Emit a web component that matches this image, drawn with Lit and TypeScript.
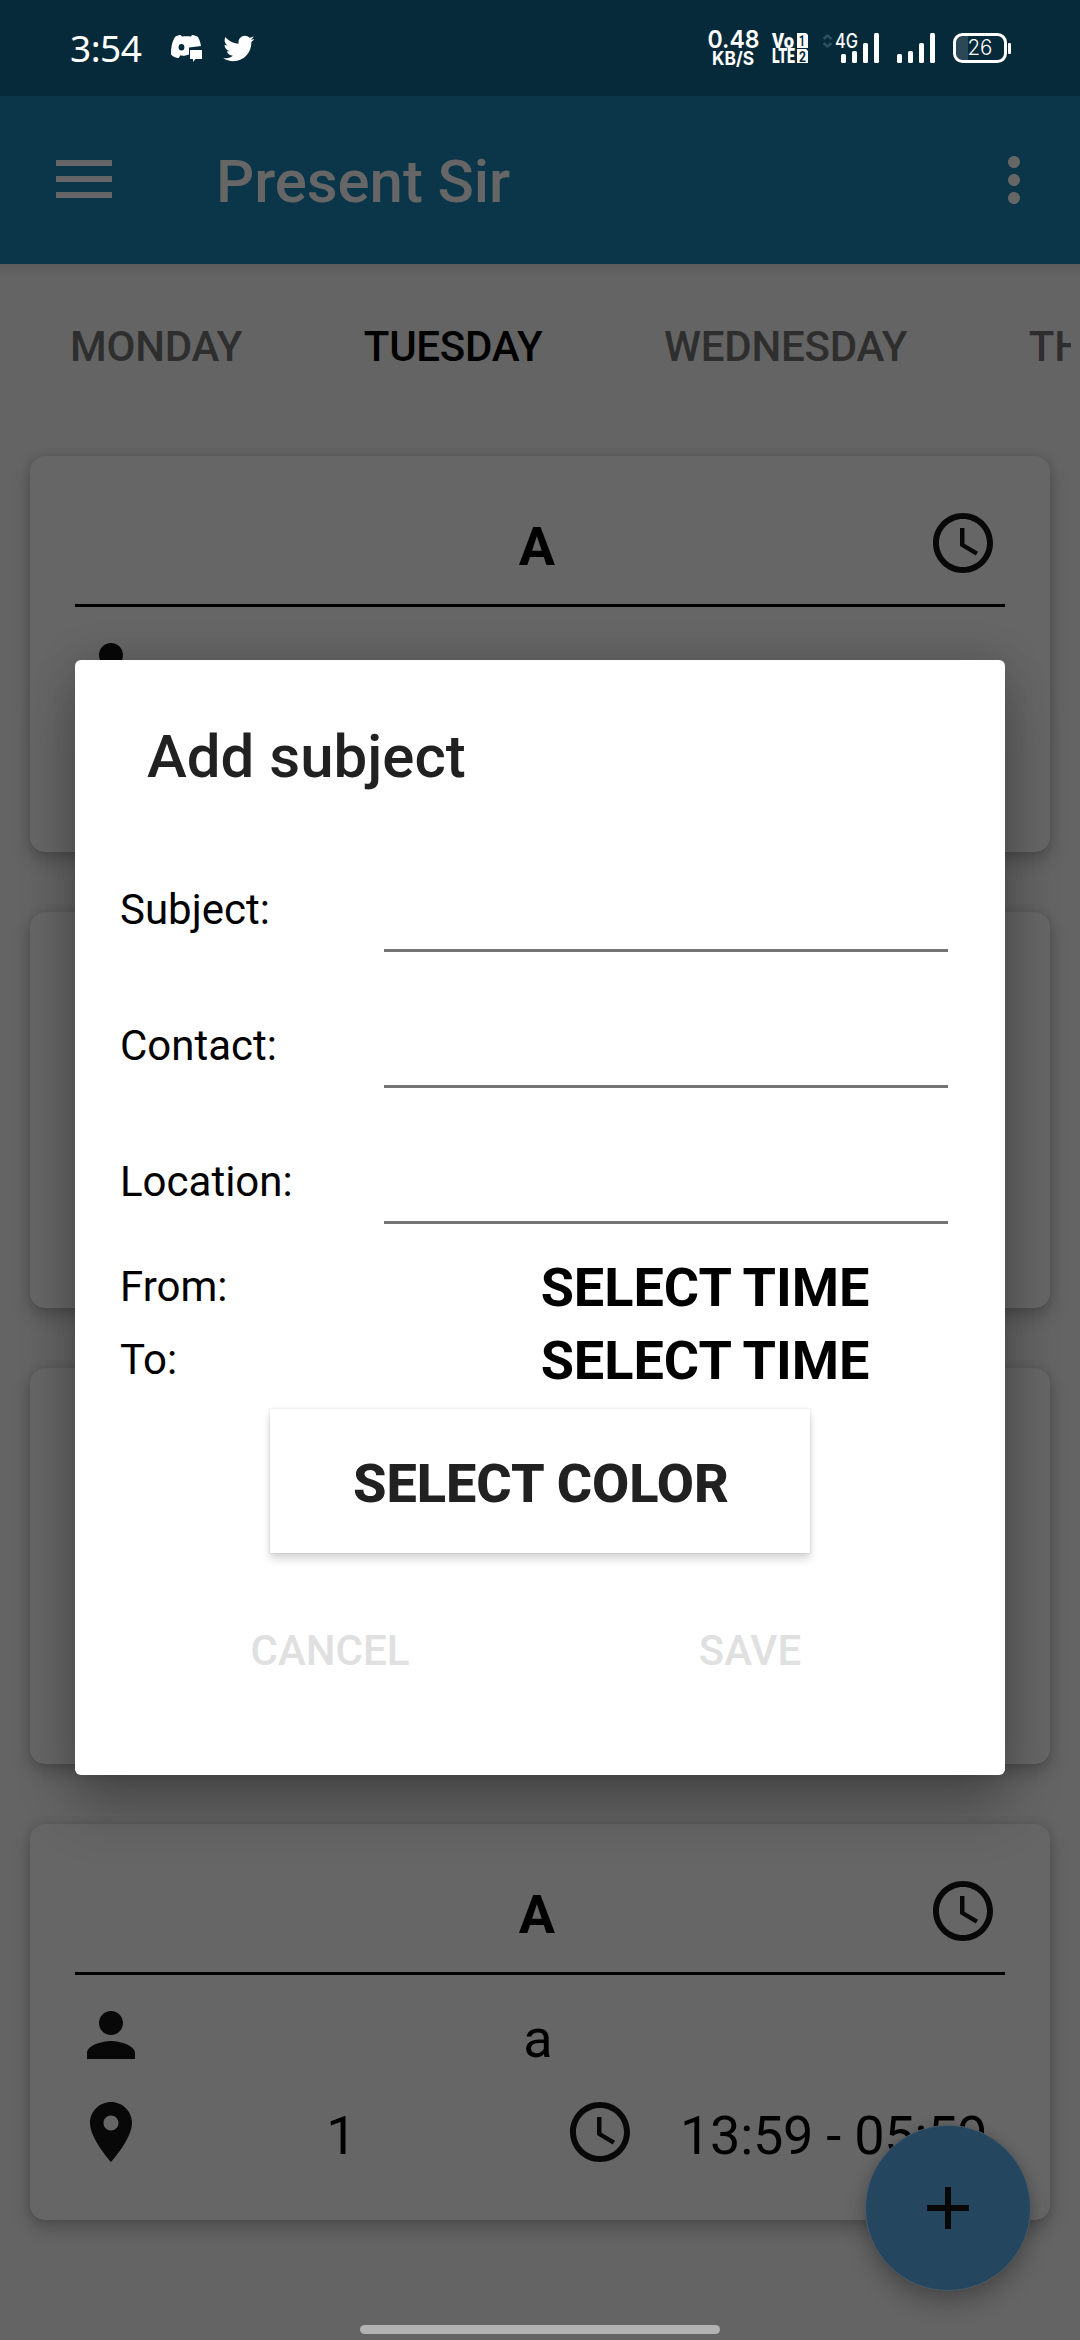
import { LitElement, html, svg, css } from "lit";
import { customElement, property } from "lit/decorators.js";

const CLOCK = "M11.99 2C6.47 2 2 6.48 2 12s4.47 10 9.99 10C17.52 22 22 17.52 22 12S17.52 2 11.99 2zM12 20c-4.42 0-8-3.58-8-8s3.58-8 8-8 8 3.58 8 8-3.58 8-8 8zm.5-13H11v6l5.25 3.15.75-1.23-4.5-2.67z";
const PERSON = "M12 12c2.21 0 4-1.79 4-4s-1.79-4-4-4-4 1.79-4 4 1.79 4 4 4zm0 2c-2.67 0-8 1.34-8 4v2h16v-2c0-2.66-5.33-4-8-4z";
const PIN = "M12 2C8.13 2 5 5.13 5 9c0 5.25 7 13 7 13s7-7.75 7-13c0-3.87-3.13-7-7-7zm0 9.5c-1.38 0-2.5-1.12-2.5-2.5s1.12-2.5 2.5-2.5 2.5 1.12 2.5 2.5-1.12 2.5-2.5 2.5z";
const MENU = "M2.667 5.333h18.667v2H2.667zM2.667 10.667h18.667v2H2.667zM2.667 16h18.667v2H2.667z";
const MORE = "M12 8c1.1 0 2-.9 2-2s-.9-2-2-2-2 .9-2 2 .9 2 2 2zm0 2c-1.1 0-2 .9-2 2s.9 2 2 2 2-.9 2-2-.9-2-2-2zm0 6c-1.1 0-2 .9-2 2s.9 2 2 2 2-.9 2-2-.9-2-2-2z";
const PLUS = "M19 13h-6v6h-2v-6H5v-2h6V5h2v6h6v2z";
const TWITTER = "M23.643 4.937c-.835.37-1.732.62-2.675.733.962-.576 1.7-1.49 2.048-2.578-.9.534-1.897.922-2.958 1.13-.85-.904-2.06-1.47-3.4-1.47-2.572 0-4.658 2.086-4.658 4.66 0 .364.042.718.12 1.06-3.873-.195-7.304-2.05-9.602-4.868-.4.69-.63 1.49-.63 2.342 0 1.616.823 3.043 2.072 3.878-.764-.025-1.482-.234-2.11-.583v.06c0 2.257 1.605 4.14 3.737 4.568-.392.106-.803.162-1.227.162-.3 0-.593-.028-.877-.082.593 1.85 2.313 3.198 4.352 3.234-1.595 1.25-3.604 1.995-5.786 1.995-.376 0-.747-.022-1.112-.065 2.062 1.323 4.51 2.093 7.14 2.093 8.57 0 13.255-7.098 13.255-13.254 0-.2-.005-.402-.014-.602.91-.658 1.7-1.477 2.323-2.41z";

@customElement("md-icon")
class MdIcon extends LitElement {
  @property() path = "";
  static styles = css`
    :host { display: block; width: 72px; height: 72px; flex: none; }
    svg { display: block; width: 100%; height: 100%; fill: currentColor; }
  `;
  render() {
    return html`<svg viewBox="0 0 24 24"><path d=${this.path}></path></svg>`;
  }
}

@customElement("status-bar")
class StatusBar extends LitElement {
  static styles = css`
    :host { display: flex; height: 96px; background: #062a3a; color: #fff; padding: 0 67px 0 70px; align-items: center; box-sizing: border-box; }
    .time { font: 400 37px/44px "Noto Sans", sans-serif; width: 101px; letter-spacing: -0.5px; }
    .discord { width: 31px; height: 28px; margin-right: 20px; }
    .twitter { width: 33px; height: 33px; }
    svg { display: block; }
    .right { margin-left: auto; }
    text { font-family: Inter, sans-serif; fill: #fff; }
    .cond { font-family: Roboto, sans-serif; font-weight: 900; }
    .knock { fill: #062a3a; font-family: Roboto, sans-serif; font-weight: 700; }
  `;
  private bars(x: number) {
    return [[0, 54], [11, 51], [22, 43], [33, 33]].map(
      ([dx, y]) => svg`<rect x=${x + dx} y=${y} width="5" height=${63 - y} rx="1.5" fill="#fff"></rect>`
    );
  }
  render() {
    return html`
      <span class="time">3:54</span>
      <svg class="discord" viewBox="0 0 31 28">
        <path fill="#fff" fill-rule="evenodd" d="M9.500 1C7 1.300 5.200 2 4 3C1.500 7 0 12 0 20.500C2 22.700 4.500 23.800 7.700 24L9.300 21.500L7.600 20.500C9.500 21.600 12 22 14.500 21.500L18 20.500V13.500L30 12C29.400 8 28.200 5 27 3C25.500 2 23.500 1.200 21 1L20 2.500C17 2 14 2 11 2.500ZM10.500 10a2.900 3.200 0 1 1 0 6.400a2.900 3.200 0 1 1 0-6.400Z"></path>
        <path fill="#fff" stroke="#062a3a" stroke-width="1.500" paint-order="stroke" d="M19 16h12v9h-6.500l-2.500 3v-3h-3z"></path>
      </svg>
      <svg class="twitter" viewBox="0 0 24 24" fill="#fff"><path d=${TWITTER}></path></svg>
      <svg class="right" width="306" height="96" viewBox="707 0 306 96">
        <text x="707.500" y="48" font-size="24.500" font-weight="600" textLength="52" lengthAdjust="spacingAndGlyphs">0.48</text>
        <text x="712" y="65" font-size="18.500" font-weight="700" textLength="42" lengthAdjust="spacingAndGlyphs">KB/S</text>
        <text class="cond" x="772" y="47.500" font-size="20" textLength="22" lengthAdjust="spacingAndGlyphs">Vo</text>
        <text class="cond" x="772" y="63" font-size="20" textLength="23" lengthAdjust="spacingAndGlyphs">LTE</text>
        <path fill="#fff" d="M797 33h9l2 2v13h-11zM797 49h9l2 2v12h-11z"></path>
        <text class="knock" x="799" y="46" font-size="15" textLength="6" lengthAdjust="spacingAndGlyphs">1</text>
        <text class="knock" x="799" y="61.500" font-size="15" textLength="7" lengthAdjust="spacingAndGlyphs">2</text>
        <path d="M823.500 39l4-3.500l4 3.500M823.500 43l4 3.500l4-3.500" fill="none" stroke="#304e5b" stroke-width="2.600"></path>
        <text x="835" y="48" font-size="19.500" font-weight="500" textLength="23" lengthAdjust="spacingAndGlyphs">4G</text>
        ${this.bars(841)} ${this.bars(897)}
        <path d="M964 36h4v24h-4q-8 0-8-8v-8q0-8 8-8z" fill="#2a4856"></path>
        <rect x="954.500" y="34.500" width="51" height="27" rx="8" fill="none" stroke="#fff" stroke-width="3"></rect>
        <rect x="1008" y="43" width="3" height="11" rx="1" fill="#fff"></rect>
        <text x="967.500" y="55" font-size="21" font-weight="300" textLength="25" lengthAdjust="spacingAndGlyphs">26</text>
      </svg>
    `;
  }
}

@customElement("subject-card")
class SubjectCard extends LitElement {
  @property() name = "";
  @property() teacher = "";
  @property() room = "";
  @property() time = "";
  static styles = css`
    :host {
      display: block; height: 396px; box-sizing: border-box; padding: 45px 45px 0; border-radius: 15px;
      background: #666; color: #000; font: 400 54px/64px Roboto, sans-serif;
      box-shadow: 0 9px 18px rgba(0, 0, 0, .2), 0 0 9px rgba(0, 0, 0, .13);
    }
    md-icon { color: #080808; }
    .head { display: grid; grid-template-columns: 852px 72px; height: 103px; border-bottom: 3px solid #000; }
    .head span { font-weight: 700; text-align: center; padding: 14px 0 0 72px; }
    .head md-icon { margin-top: 6px; }
    .row { display: flex; margin-top: 24px; height: 72px; }
    .row span { flex: none; text-align: center; padding-top: 8px; }
    .who { width: 782px; }
    .last { margin-top: 25px; }
    .room { width: 389px; margin-right: 28px; }
    .last .time { padding-left: 44px; letter-spacing: -0.25px; }
  `;
  render() {
    return html`
      <div class="head"><span>${this.name}</span><md-icon .path=${CLOCK}></md-icon></div>
      <div class="row"><md-icon .path=${PERSON}></md-icon><span class="who">${this.teacher}</span></div>
      <div class="row last">
        <md-icon .path=${PIN}></md-icon><span class="room">${this.room}</span>
        <md-icon .path=${CLOCK}></md-icon><span class="time">${this.time}</span>
      </div>
    `;
  }
}

@customElement("subject-dialog")
class SubjectDialog extends LitElement {
  static styles = css`
    :host {
      display: flex; flex-direction: column; width: 930px; height: 1115px; box-sizing: border-box; padding: 0 45px;
      border-radius: 6px; background: #fff; color: #000; font: 400 42px/50px Roboto, sans-serif;
      box-shadow: 0 34px 56px rgba(0, 0, 0, .24), 0 0 42px rgba(0, 0, 0, .16);
    }
    h2 { margin: 62px 0 0 27px; font: 500 60px/70px Roboto, sans-serif; color: #212121; height: 91px; }
    .field { display: flex; justify-content: space-between; height: 136px; align-items: flex-end; padding-right: 12px; }
    .field:first-of-type { height: 139px; }
    .field label { padding-bottom: 17px; }
    .line { width: 564px; height: 3px; background: #757575; }
    .slot { display: flex; height: 73px; }
    .slot label { flex: none; width: 210px; padding-top: 12px; }
    .slot b { flex: none; width: 600px; margin-left: 75px; font: 700 54px/64px Roboto, sans-serif; text-align: center; padding-top: 6px; box-sizing: border-box; }
    .times { padding-top: 26px; }
    .color { align-self: center; width: 540px; height: 144px; margin-top: 13px; border: 0; background: #fff; color: #212121;
      font: 800 54px/64px Roboto, sans-serif; padding: 5px 0 0 2px; border-radius: 1px;
      box-shadow: 0 6px 8px rgba(0, 0, 0, .16), 0 0 3px rgba(0, 0, 0, .16); }
    .actions { display: flex; color: #e0e0e0; font-weight: 500; margin-top: 73px; }
    .actions span { width: 420px; text-align: center; }
  `;
  render() {
    return html`
      <h2>Add subject</h2>
      ${["Subject:", "Contact:", "Location:"].map(
        (l) => html`<div class="field"><label>${l}</label><span class="line"></span></div>`
      )}
      <div class="times">
        ${["From:", "To:"].map((l) => html`<div class="slot"><label>${l}</label><b>SELECT TIME</b></div>`)}
      </div>
      <button class="color">SELECT COLOR</button>
      <div class="actions"><span>CANCEL</span><span>SAVE</span></div>
    `;
  }
}

@customElement("app-root")
class AppRoot extends LitElement {
  static styles = css`
    :host { display: block; position: relative; width: 1080px; height: 2340px; overflow: hidden; background: #646464; font-family: Roboto, sans-serif; }
    .bar { display: flex; align-items: center; height: 168px; box-sizing: border-box; padding: 0 30px 0 48px; background: #0b3548; color: #666; }
    .bar .title { flex: 1; margin-left: 96px; font: 500 60px/70px Roboto, sans-serif; padding-top: 4px; letter-spacing: -0.1px; }
    .tabs { display: flex; gap: 121.7px; height: 192px; box-sizing: border-box; margin-right: 9px; padding: 58px 0 0 70px; overflow: hidden;
      font: 500 42px/50px Roboto, sans-serif; letter-spacing: -0.25px; color: #2e2e2e; white-space: nowrap; }
    .edge { height: 192px; background: linear-gradient(#5c5c5c, #646464 14px); }
    .tabs .on { color: #000; }
    .list { display: flex; flex-direction: column; gap: 60px; padding: 0 30px; }
    .fab { position: absolute; left: 865px; top: 2125px; width: 166px; height: 166px; box-sizing: border-box; border: 1px solid #4b5a66; border-radius: 50%;
      background: #24465f; color: #080808; display: grid; place-items: center; box-shadow: 0 14px 22px rgba(0, 0, 0, .22), 0 0 12px rgba(0, 0, 0, .12); }
    .dialog { position: absolute; left: 75px; top: 660px; }
    .handle { position: absolute; left: 360px; top: 2325px; width: 360px; height: 9px; border-radius: 5px; background: #b2b2b2; }
  `;
  render() {
    return html`
      <status-bar></status-bar>
      <header class="bar">
        <md-icon .path=${MENU}></md-icon>
        <span class="title">Present Sir</span>
        <md-icon .path=${MORE}></md-icon>
      </header>
      <div class="edge">
        <nav class="tabs">
          ${["MONDAY", "TUESDAY", "WEDNESDAY", "THURSDAY"].map(
            (d) => html`<span class=${d === "TUESDAY" ? "on" : ""}>${d}</span>`
          )}
        </nav>
      </div>
      <main class="list">
        ${[0, 1, 2, 3].map(
          () => html`<subject-card name="A" teacher="a" room="1" time="13:59 - 05:59"></subject-card>`
        )}
      </main>
      <div class="fab"><md-icon .path=${PLUS}></md-icon></div>
      <subject-dialog class="dialog"></subject-dialog>
      <div class="handle"></div>
    `;
  }
}
